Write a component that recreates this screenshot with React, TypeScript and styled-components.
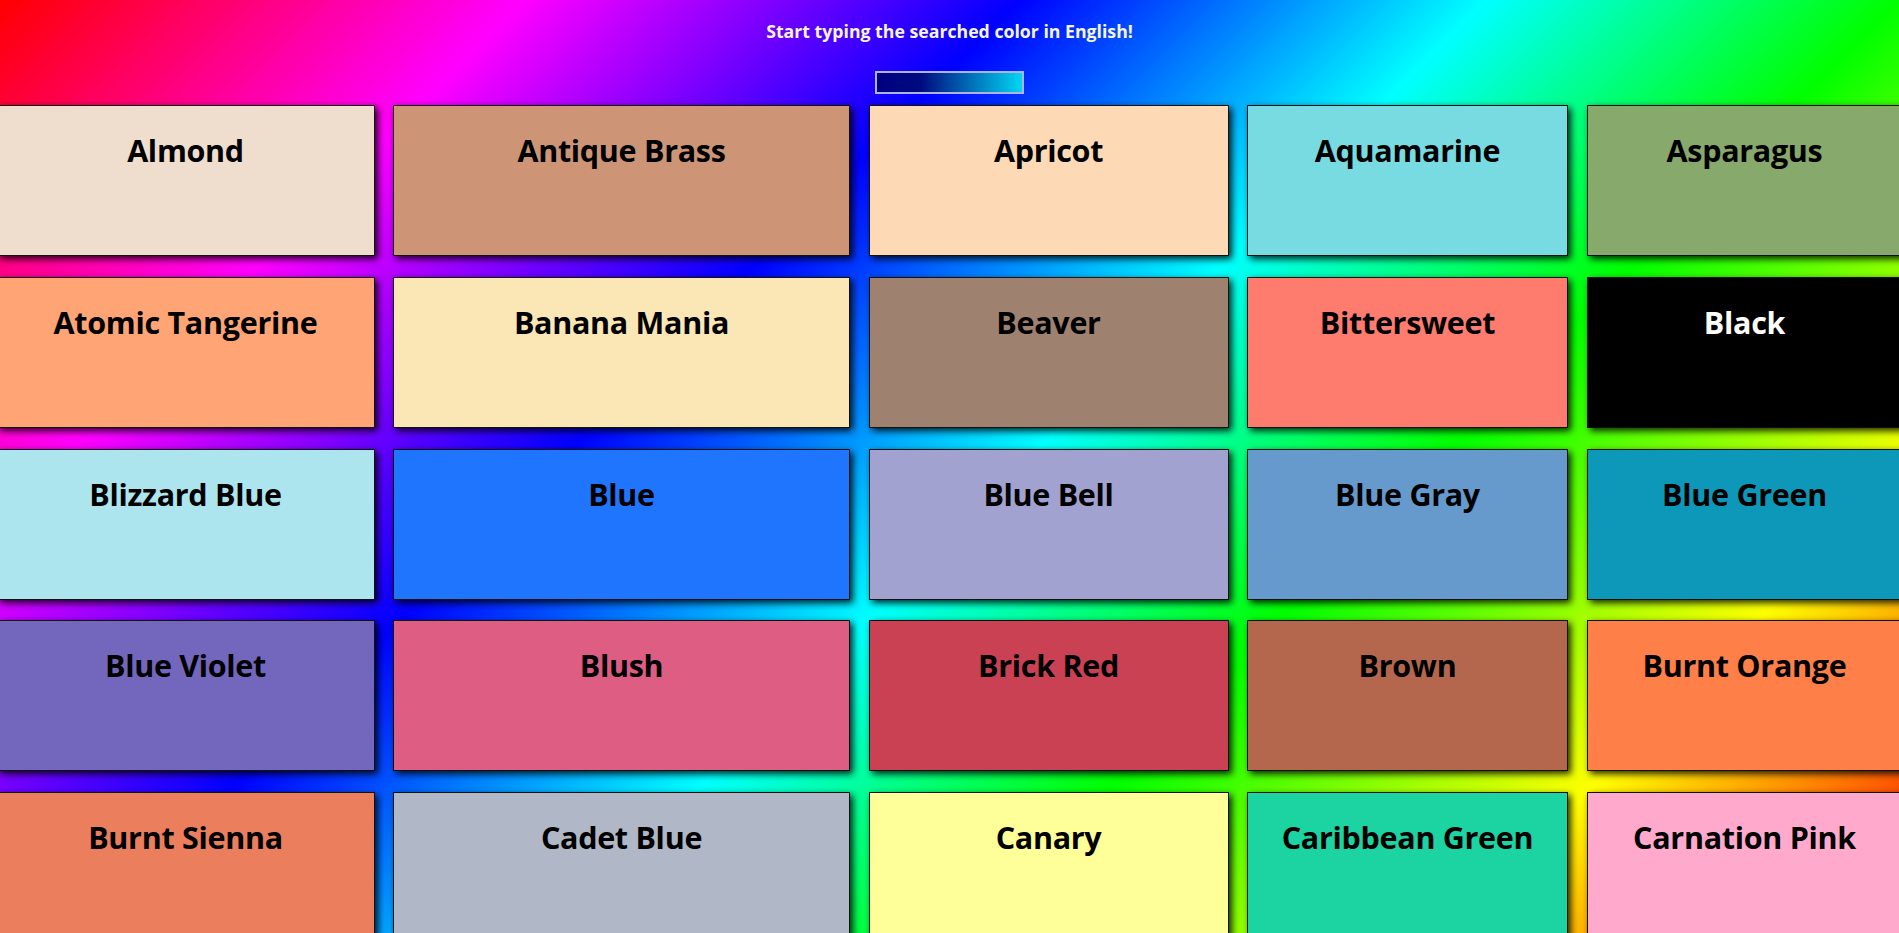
import React from "react";
import styled, { createGlobalStyle } from "styled-components";

const GlobalStyle = createGlobalStyle`
  html, body {
    margin: 0;
    padding: 0;
    height: 100%;
    overflow: hidden;
  }
  body {
    font-family: "Open Sans", "Noto Sans", sans-serif;
    background: linear-gradient(
      135deg,
      #ff0000 0%,
      #ff00ff 18.5%,
      #0000ff 36%,
      #00ffff 52.5%,
      #00ff00 67%,
      #ffff00 84%,
      #ff0000 100%
    );
    background-attachment: fixed;
  }
`;

const Page = styled.main`
  display: flex;
  flex-direction: column;
  align-items: center;
  padding-top: 19px;
  width: 100%;
`;

const Title = styled.p`
  margin: 0 0 28px;
  font-size: 17.7px;
  line-height: 24px;
  font-weight: 700;
  color: #f5f5dc;
  text-align: center;
`;

const SearchInput = styled.input`
  box-sizing: border-box;
  width: 149px;
  height: 23px;
  margin: 0 0 11px;
  padding: 0 3px;
  border: 2px solid #aeb4dc;
  background: linear-gradient(90deg, #000080 0%, #000a80 30%, #00d6f2 100%);
  color: #ffffe0;
  caret-color: #ffd700;
  outline: none;
  font-family: "Open Sans", sans-serif;
  font-size: 13px;
`;

const Grid = styled.section`
  display: grid;
  width: 100%;
  grid-template-columns: 378px 457px 360px 321px 316px;
  grid-auto-rows: 151px;
  column-gap: 18.5px;
  row-gap: 20.75px;
  justify-content: center;
`;

const Card = styled.div<{ $bg: string; $fg: string }>`
  box-sizing: border-box;
  display: flex;
  justify-content: center;
  align-items: flex-start;
  padding-top: 25px;
  background: ${(p) => p.$bg};
  color: ${(p) => p.$fg};
  border: 1px solid #111;
  box-shadow: 3px 3px 7px rgba(0, 0, 0, 0.85);
`;

const Label = styled.h2`
  margin: 0;
  font-size: 30.5px;
  line-height: 38px;
  font-weight: 700;
  letter-spacing: -0.3px;
  white-space: nowrap;
`;

const colors: [string, string][] = [
  ["Almond", "#EFDECD"],
  ["Antique Brass", "#CD9575"],
  ["Apricot", "#FDD9B5"],
  ["Aquamarine", "#78DBE2"],
  ["Asparagus", "#87A96B"],
  ["Atomic Tangerine", "#FFA474"],
  ["Banana Mania", "#FAE7B5"],
  ["Beaver", "#9F8170"],
  ["Bittersweet", "#FD7C6E"],
  ["Black", "#000000"],
  ["Blizzard Blue", "#ACE5EE"],
  ["Blue", "#1F75FE"],
  ["Blue Bell", "#A2A2D0"],
  ["Blue Gray", "#6699CC"],
  ["Blue Green", "#0D98BA"],
  ["Blue Violet", "#7366BD"],
  ["Blush", "#DE5D83"],
  ["Brick Red", "#CB4154"],
  ["Brown", "#B4674D"],
  ["Burnt Orange", "#FF7F49"],
  ["Burnt Sienna", "#EA7E5D"],
  ["Cadet Blue", "#B0B7C6"],
  ["Canary", "#FFFF99"],
  ["Caribbean Green", "#1CD3A2"],
  ["Carnation Pink", "#FFAACC"],
];

export default function App() {
  return (
    <>
      <GlobalStyle />
      <Page>
        <Title>Start typing the searched color in English!</Title>
        <SearchInput type="text" autoFocus aria-label="Search color" />
        <Grid>
          {colors.map(([name, hex]) => (
            <Card key={name} $bg={hex} $fg={hex === "#000000" ? "#ffffff" : "#000000"}>
              <Label>{name}</Label>
            </Card>
          ))}
        </Grid>
      </Page>
    </>
  );
}
